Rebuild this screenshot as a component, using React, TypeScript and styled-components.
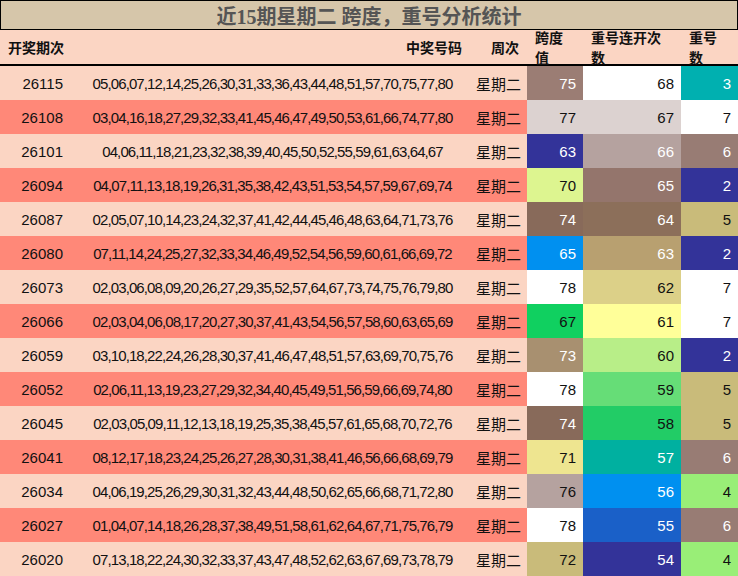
import React from "react";
import styled, { createGlobalStyle } from "styled-components";

const Global = createGlobalStyle`
  body { margin: 0; background: #fff; font-family: "Liberation Sans", "Noto Sans CJK SC", sans-serif; }
`;

type Cell = [string, string, boolean];
const W = "#ffffff";
const rows: [string, string, Cell, Cell, Cell][] = [
  ["26115", "05,06,07,12,14,25,26,30,31,33,36,43,44,48,51,57,70,75,77,80", ["75", "#9b7d74", true], ["68", W, false], ["3", "#00b0b0", true]],
  ["26108", "03,04,16,18,27,29,32,33,41,45,46,47,49,50,53,61,66,74,77,80", ["77", "#dcd2d0", false], ["67", "#dcd2d0", false], ["7", W, false]],
  ["26101", "04,06,11,18,21,23,32,38,39,40,45,50,52,55,59,61,63,64,67", ["63", "#333399", true], ["66", "#b5a29f", true], ["6", "#987c74", true]],
  ["26094", "04,07,11,13,18,19,26,31,35,38,42,43,51,53,54,57,59,67,69,74", ["70", "#ddf590", false], ["65", "#94756c", true], ["2", "#333399", true]],
  ["26087", "02,05,07,10,14,23,24,32,37,41,42,44,45,46,48,63,64,71,73,76", ["74", "#886a5a", true], ["64", "#8c6f5a", true], ["5", "#c9bb7a", false]],
  ["26080", "07,11,14,24,25,27,32,33,34,46,49,52,54,56,59,60,61,66,69,72", ["65", "#0090f0", true], ["63", "#b8a070", true], ["2", "#333399", true]],
  ["26073", "02,03,06,08,09,20,26,27,29,35,52,57,64,67,73,74,75,76,79,80", ["78", W, false], ["62", "#dcd088", false], ["7", W, false]],
  ["26066", "02,03,04,06,08,17,20,27,30,37,41,43,54,56,57,58,60,63,65,69", ["67", "#10d060", false], ["61", "#ffff99", false], ["7", W, false]],
  ["26059", "03,10,18,22,24,26,28,30,37,41,46,47,48,51,57,63,69,70,75,76", ["73", "#a89070", true], ["60", "#b8ee88", false], ["2", "#333399", true]],
  ["26052", "02,06,11,13,19,23,27,29,32,34,40,45,49,51,56,59,66,69,74,80", ["78", W, false], ["59", "#66dd77", false], ["5", "#c9bb7a", false]],
  ["26045", "02,03,05,09,11,12,13,18,19,25,35,38,45,57,61,65,68,70,72,76", ["74", "#886a5a", true], ["58", "#22cc66", false], ["5", "#c9bb7a", false]],
  ["26041", "08,12,17,18,23,24,25,26,27,28,30,31,38,41,46,56,66,68,69,79", ["71", "#eee590", false], ["57", "#00b0a0", true], ["6", "#987c74", true]],
  ["26034", "04,06,19,25,26,29,30,31,32,43,44,48,50,62,65,66,68,71,72,80", ["76", "#b5a29f", false], ["56", "#0090f0", true], ["4", "#99ee77", false]],
  ["26027", "01,04,07,14,18,26,28,37,38,49,51,58,61,62,64,67,71,75,76,79", ["78", W, false], ["55", "#1a60c8", true], ["6", "#987c74", true]],
  ["26020", "07,13,18,22,24,30,32,33,37,43,47,48,52,62,63,67,69,73,78,79", ["72", "#c9bb7a", false], ["54", "#333399", true], ["4", "#99ee77", false]],
];

const Wrap = styled.div`
  width: 738px;
`;
const Title = styled.div`
  height: 28px;
  background: #d6c6aa;
  border: 1px solid #000;
  box-sizing: border-box;
  height: 30px;
  display: flex;
  align-items: center;
  justify-content: center;
  font-size: 20px;
  font-weight: bold;
  color: #555;
  font-family: "Liberation Serif", "Noto Sans CJK SC", serif;
`;
const Grid = styled.div`
  display: grid;
  grid-template-columns: 75px 395px 57px 56px 98px 57px;
`;
const Head = styled.div<{ $align?: string }>`
  height: 34px;
  background: #fbd5c3;
  border-bottom: 2px solid #000;
  display: flex;
  align-items: center;
  justify-content: ${(p) => p.$align || "flex-end"};
  padding: 0 8px;
  font-size: 14px;
  font-weight: bold;
  color: #111;
`;
const Td = styled.div<{ $bg: string; $light?: boolean; $align?: string }>`
  height: 34px;
  background: ${(p) => p.$bg};
  color: ${(p) => (p.$light ? "#fff" : "#111")};
  display: flex;
  align-items: center;
  justify-content: ${(p) => p.$align || "flex-end"};
  padding: 0 7px;
  font-size: 15px;
  white-space: nowrap;
  overflow: hidden;
`;
const Nums = styled.span`
  display: inline-block;
  font-size: 15px;
  letter-spacing: -0.9px;
`;

export default function App() {
  return (
    <Wrap>
      <Global />
      <Title>近15期星期二 跨度，重号分析统计</Title>
      <Grid>
        <Head $align="flex-start">开奖期次</Head>
        <Head>中奖号码</Head>
        <Head>周次</Head>
        <Head>跨度值</Head>
        <Head>重号连开次数</Head>
        <Head>重号数</Head>
        {rows.map((r, i) => {
          const bg = i % 2 === 0 ? "#fbd5c3" : "#ff8878";
          return (
            <React.Fragment key={r[0]}>
              <Td $bg={bg} style={{ paddingRight: 12 }}>{r[0]}</Td>
              <Td $bg={bg} $align="center"><Nums>{r[1]}</Nums></Td>
              <Td $bg={bg} $align="center">星期二</Td>
              {[r[2], r[3], r[4]].map((c, j) => (
                <Td key={j} $bg={c[1]} $light={c[2]}>{c[0]}</Td>
              ))}
            </React.Fragment>
          );
        })}
      </Grid>
    </Wrap>
  );
}
